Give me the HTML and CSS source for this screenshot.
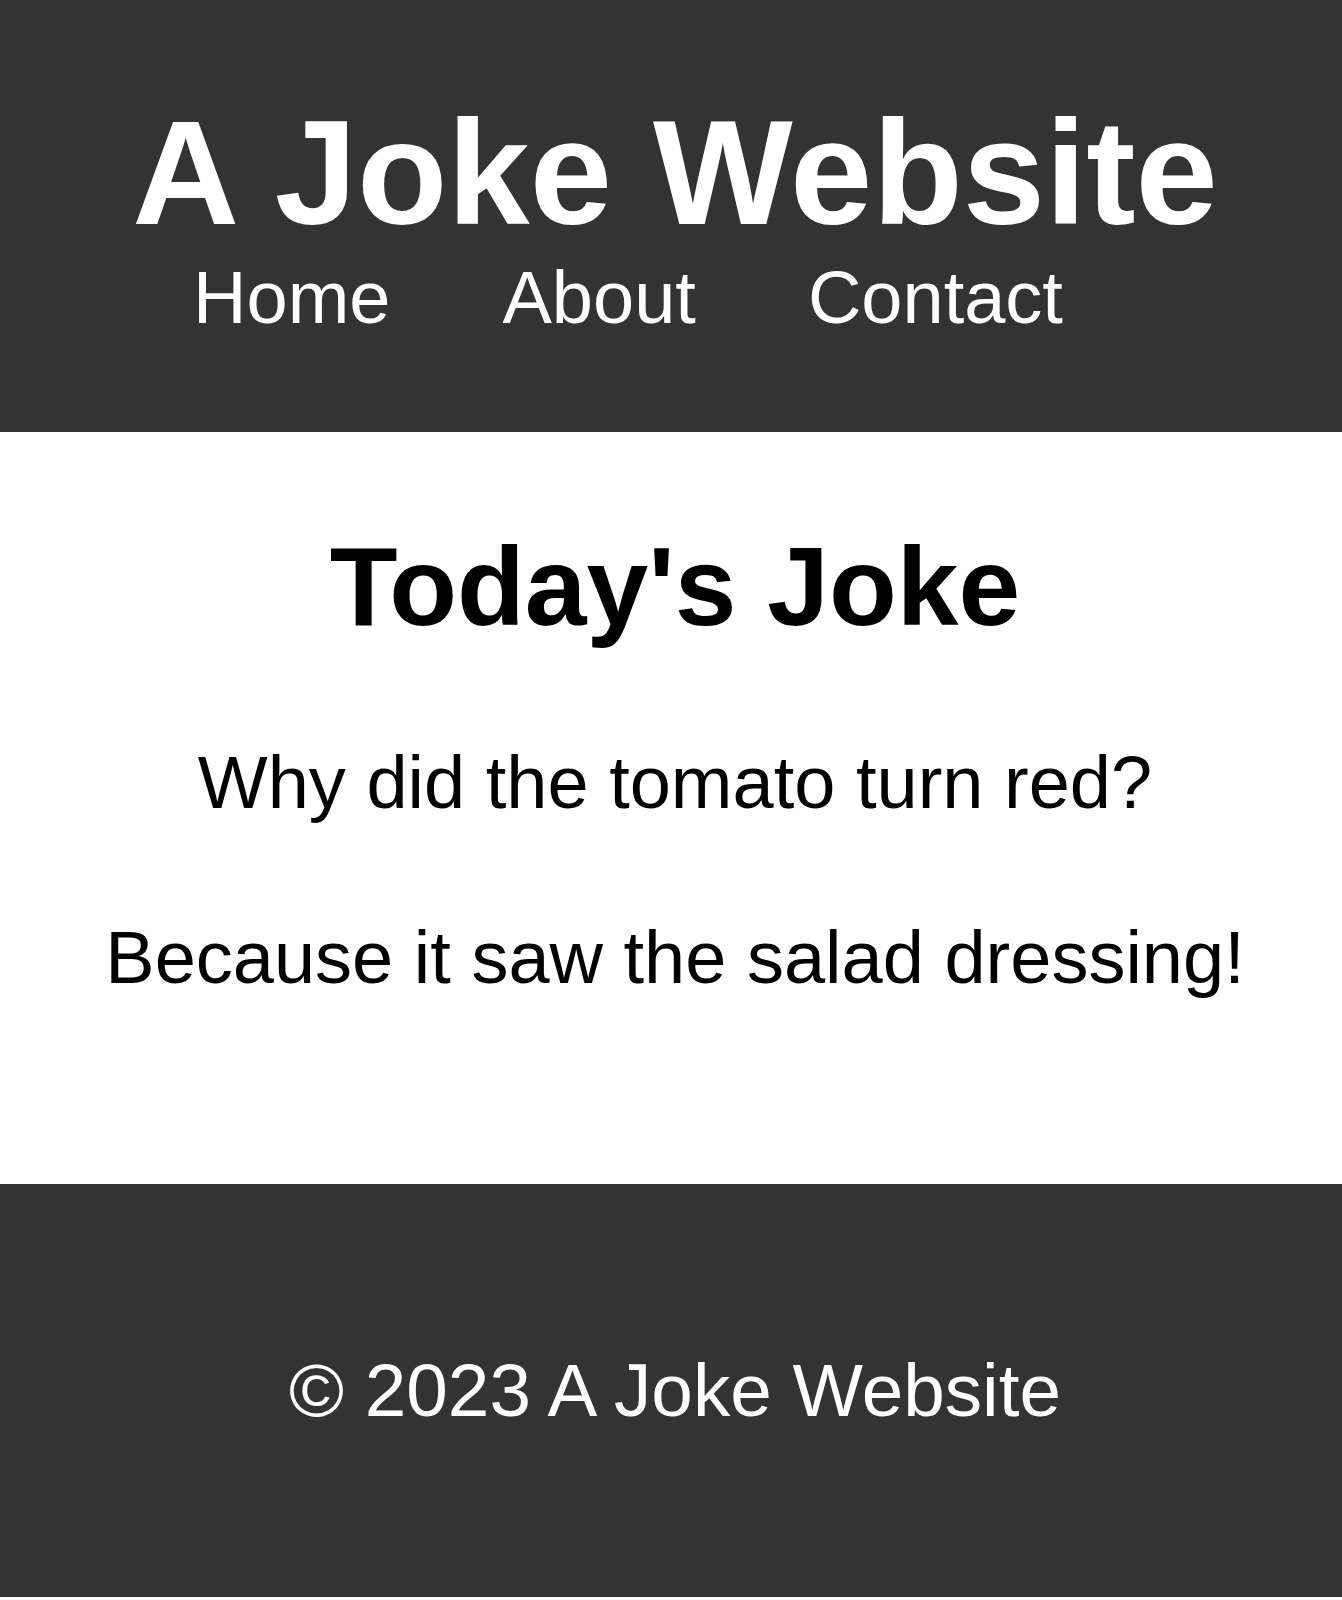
FILE: index.html
```html
<!DOCTYPE html>
<html lang="en">
<head>
<meta charset="utf-8">
<title>A Joke Website</title>
<link rel="stylesheet" href="styles.css">
</head>
<body>
<header class="site-header">
  <h1 class="site-title">A Joke Website</h1>
  <nav class="site-nav">
    <a class="nav-link" href="#">Home</a>
    <a class="nav-link" href="#">About</a>
    <a class="nav-link" href="#">Contact</a>
  </nav>
</header>
<main class="joke">
  <h2 class="joke-title">Today's Joke</h2>
  <p class="joke-line">Why did the tomato turn red?</p>
  <p class="joke-line">Because it saw the salad dressing!</p>
</main>
<footer class="site-footer">
  <p class="footer-text">© 2023 A Joke Website</p>
</footer>
</body>
</html>
```

FILE: styles.css
```css
html, body {
  margin: 0;
  padding: 0;
  background: #ffffff;
}

body {
  font-family: "Liberation Sans", Arial, sans-serif;
  color: #000000;
}

.site-header {
  background: #333333;
  color: #ffffff;
  padding: 88px 0 97px 8px;
  text-align: center;
}

.site-title {
  margin: 0;
  font-size: 148px;
  font-weight: bold;
  line-height: 170px;
}

.site-nav {
  display: flex;
  justify-content: center;
  gap: 112px;
  padding-right: 94px;
  margin-top: 3px;
}

.nav-link {
  color: #ffffff;
  text-decoration: none;
  font-size: 74px;
  line-height: 74px;
}

.joke {
  padding: 99px 0 189px 8px;
  text-align: center;
}

.joke-title {
  margin: 0 0 103px;
  font-size: 111px;
  font-weight: bold;
  line-height: 112px;
}

.joke-line {
  margin: 0 0 101px;
  font-size: 74px;
  line-height: 74px;
}

.joke-line:last-child {
  margin-bottom: 0;
}

.site-footer {
  background: #333333;
  color: #ffffff;
  padding: 164px 0 164px 8px;
  text-align: center;
}

.footer-text {
  margin: 0;
  font-size: 74.7px;
  line-height: 85px;
}
```
